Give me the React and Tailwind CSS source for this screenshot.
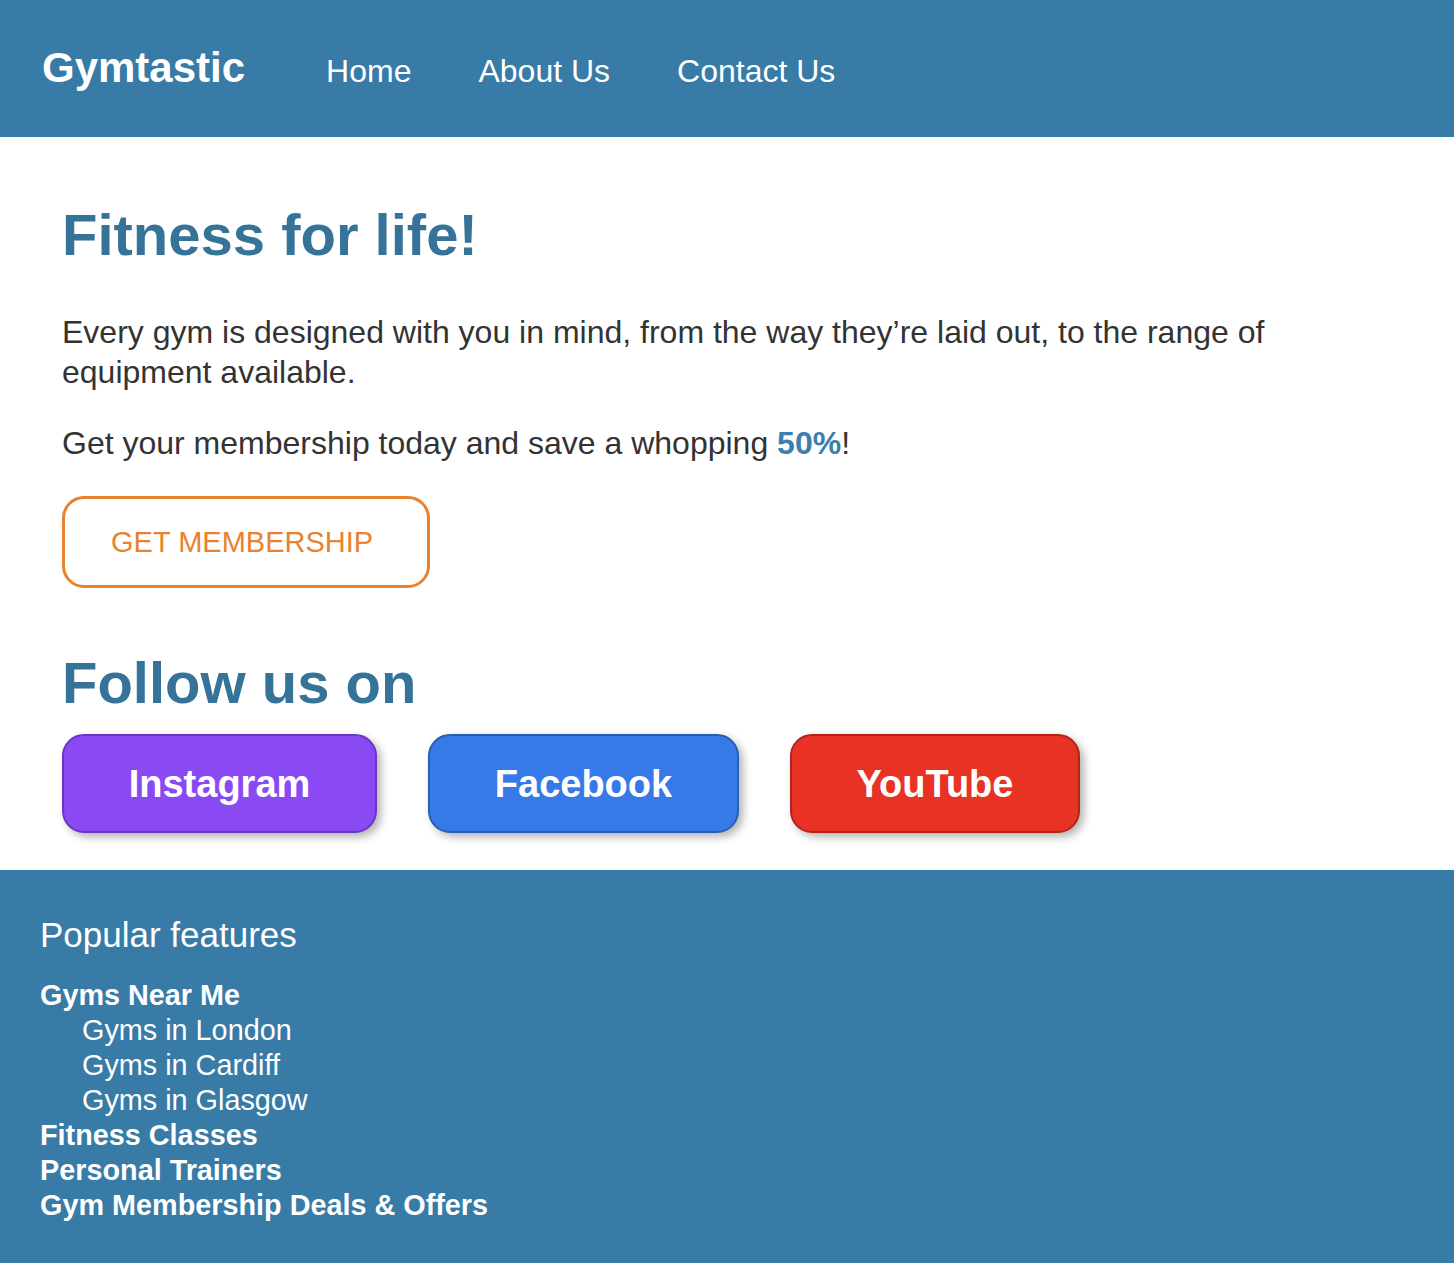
export default function App() {
  const font = { fontFamily: '"Liberation Sans", Arial, Helvetica, sans-serif' }

  return (
    <div className="min-h-screen bg-white font-['Liberation_Sans',Arial,sans-serif]" style={font}>
      {/* Header */}
      <header className="h-[137px] bg-[#377ba6] flex items-baseline pl-[42px] pt-[47px]">
        <a className="text-[42px] leading-none font-bold text-white">Gymtastic</a>
        <nav className="flex items-baseline gap-[67px] ml-[81px]">
          <a className="text-[32px] leading-none text-white">Home</a>
          <a className="text-[32px] leading-none text-white">About Us</a>
          <a className="text-[32px] leading-none text-white">Contact Us</a>
        </nav>
      </header>

      {/* Hero */}
      <main className="px-[62px] pt-[69px] pb-[37px]">
        <h1 className="text-[58px] leading-none font-bold text-[#357399]">Fitness for life!</h1>
        <p className="mt-[48px] text-[32px] leading-[40px] text-[#333333] max-w-[1300px]">
          Every gym is designed with you in mind, from the way they’re laid out, to the range of equipment available.
        </p>
        <p className="mt-[31px] text-[32px] leading-[40px] text-[#333333]">
          Get your membership today and save a whopping <span className="font-bold text-[#3a7fad]">50%</span>!
        </p>
        <button className="mt-[33px] w-[368px] h-[92px] border-[3px] border-[#e8822f] rounded-[22px] pl-[46px] text-left text-[29px] leading-none text-[#e8822f] bg-white">
          GET MEMBERSHIP
        </button>

        <h2 className="mt-[66px] text-[58px] leading-none font-bold text-[#357399]">Follow us on</h2>
        <div className="mt-[22px] flex gap-[51px]">
          <button className="w-[315px] h-[99px] rounded-[22px] bg-[#8a4af3] border-2 border-[#6a35c4] text-white text-[38px] font-bold leading-none shadow-[4px_4px_8px_rgba(0,0,0,0.3)]">
            Instagram
          </button>
          <button className="w-[311px] h-[99px] rounded-[22px] bg-[#3779e8] border-2 border-[#2a5cb4] text-white text-[38px] font-bold leading-none shadow-[4px_4px_8px_rgba(0,0,0,0.3)]">
            Facebook
          </button>
          <button className="w-[290px] h-[99px] rounded-[22px] bg-[#e83224] border-2 border-[#b3231a] text-white text-[38px] font-bold leading-none shadow-[4px_4px_8px_rgba(0,0,0,0.3)]">
            YouTube
          </button>
        </div>
      </main>

      {/* Footer */}
      <footer className="bg-[#377ba6] px-[40px] pt-[47px] pb-[40px] text-white">
        <h3 className="text-[35px] leading-none font-normal">Popular features</h3>
        <ul className="mt-[26px] text-[28.8px] leading-[35px]">
          <li className="font-bold">
            Gyms Near Me
            <ul className="pl-[42px] font-normal">
              <li>Gyms in London</li>
              <li>Gyms in Cardiff</li>
              <li>Gyms in Glasgow</li>
            </ul>
          </li>
          <li className="font-bold">Fitness Classes</li>
          <li className="font-bold">Personal Trainers</li>
          <li className="font-bold">Gym Membership Deals &amp; Offers</li>
        </ul>
      </footer>
    </div>
  )
}
